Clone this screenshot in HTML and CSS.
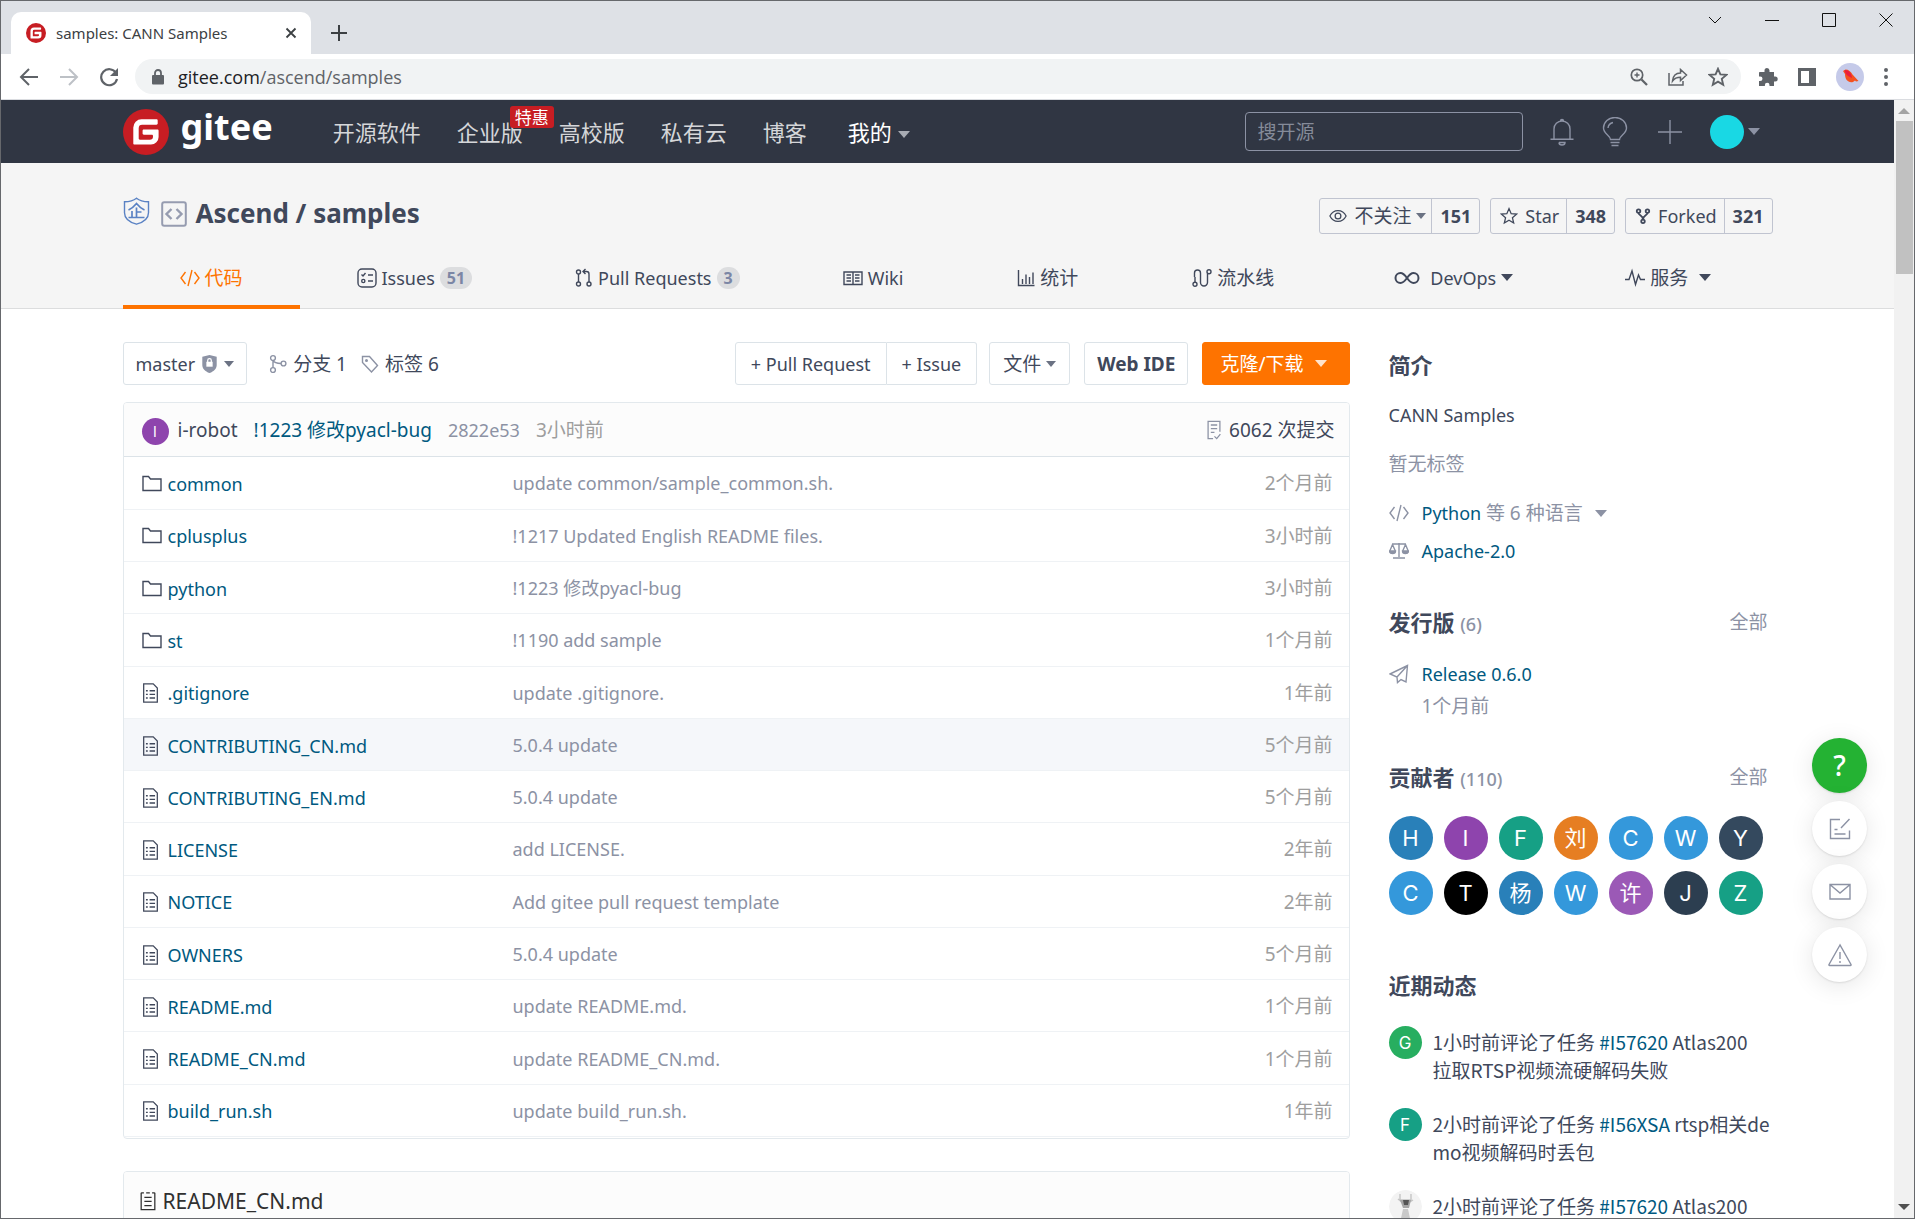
FILE: index.html
```html
<!DOCTYPE html>
<html lang="zh-CN">
<head>
<meta charset="utf-8">
<title>samples: CANN Samples</title>
<link rel="stylesheet" href="styles.css">
</head>
<body>
<svg class="sprite" aria-hidden="true">
  <symbol id="g-logo" viewBox="0 0 46 46"><circle cx="23" cy="23" r="23" fill="#c71d23" stroke="none"/><path d="M33.500 10.300H18.500a8.200 8.200 0 0 0-8.200 8.200v15.900c0 .7.500 1.200 1.200 1.200h16.500a7.600 7.600 0 0 0 7.600-7.600v-6.400c0-.7-.5-1.200-1.200-1.200H20.800c-.7 0-1.200.5-1.200 1.200v2.900c0 .7.500 1.200 1.200 1.200h8c.7 0 1.200.5 1.200 1.200v.6a3.200 3.200 0 0 1-3.200 3.200H16.900c-.7 0-1.200-.5-1.200-1.200V19.200a3.400 3.400 0 0 1 3.400-3.400h14.400c.7 0 1.200-.5 1.200-1.200v-3.100c0-.7-.5-1.200-1.200-1.200z" fill="#fff" stroke="none"/></symbol>
  <symbol id="folder" viewBox="0 0 20 20"><path d="M1 16.500V2.500h5.500l2 2.500H19v11.500z"/></symbol>
  <symbol id="file" viewBox="0 0 18 22"><path d="M1.500 1h10.500l4.500 4.500V21h-15z"/><path d="M4 8.500h2M8 8.500h6M4 12.500h2M8 12.500h6M4 16.500h2M8 16.500h6" stroke-width="1.600"/></symbol>
  <symbol id="readme" viewBox="0 0 18 22"><path d="M1.500 2v18.500h15V2M1.500 2h3M7 2h4M13.500 2h3M5 7h8M5 11.500h8M5 16h8"/></symbol>
  <symbol id="code" viewBox="0 0 20 20"><path d="M5.500 4 1 10l4.500 6M14.500 4 19 10l-4.500 6M12 2 8 18"/></symbol>
  <symbol id="issues" viewBox="0 0 20 20"><rect x="1" y="1" width="18" height="18" rx="4"/><path d="M4.500 6.500 6 8l2.500-3M11 7h5M11 13h5"/><circle cx="6.300" cy="13" r="1.600"/></symbol>
  <symbol id="pr" viewBox="0 0 18 20"><circle cx="3.500" cy="4" r="2"/><circle cx="3.500" cy="16" r="2"/><circle cx="14" cy="16" r="2"/><path d="M3.500 6v8M14 14V6c0-1.500-1-2.500-2.500-2.500H8M10.500 1 8 3.500 10.500 6"/></symbol>
  <symbol id="wiki" viewBox="0 0 20 20"><path d="M1 4h18v12.500H1zM10 4v12.500M3.500 7H8M3.500 10H8M3.500 13H8M12 7h4.500M12 10h4.500M12 13h4.500"/></symbol>
  <symbol id="chart" viewBox="0 0 18 20"><path d="M1.500 2v15.500h16M5.500 11v5M9 6.500V16M12.500 9v7M16 4.500V16"/></symbol>
  <symbol id="pipe" viewBox="0 0 20 20"><circle cx="3" cy="16.300" r="2"/><circle cx="17" cy="3.700" r="2"/><path d="M3 14.300V9M2.500 9V5a3 3 0 0 1 6 0v9.500a3.500 3.500 0 0 0 7 0V5.500"/></symbol>
  <symbol id="infinity" viewBox="0 0 26 20"><path d="M13 10c-2.500-3.500-4-5-6.500-5a5 5 0 0 0 0 10c2.500 0 4-1.500 6.500-5s4-5 6.500-5a5 5 0 0 1 0 10c-2.500 0-4-1.500-6.500-5z"/></symbol>
  <symbol id="pulse" viewBox="0 0 20 20"><path d="M0 11.500h4L7 3l3.500 13.500L13.500 7l2 4.500H20"/></symbol>
  <symbol id="eye" viewBox="0 0 20 20"><path d="M1 10c2-4 5-6 9-6s7 2 9 6c-2 4-5 6-9 6s-7-2-9-6z"/><circle cx="10" cy="10" r="3.200"/></symbol>
  <symbol id="star" viewBox="0 0 20 20"><path d="m10 1.800 2.400 5.600 6 .5-4.600 4 1.400 5.900-5.200-3.100-5.200 3.100 1.400-5.900-4.600-4 6-.5z"/></symbol>
  <symbol id="fork" viewBox="0 0 18 20"><circle cx="4" cy="4.500" r="2"/><circle cx="14" cy="4.500" r="2"/><circle cx="9" cy="16" r="2"/><path d="M4 6.500c0 3 5 2.500 5 7.500M14 6.500c0 3-5 2.500-5 7.500"/></symbol>
  <symbol id="branch" viewBox="0 0 18 20"><circle cx="4" cy="4" r="2.400"/><circle cx="4" cy="16" r="2.400"/><circle cx="14.500" cy="9.500" r="2.400"/><path d="M4 6.400v7.200M4 6.400c1 2 4 3.100 8 3.100"/></symbol>
  <symbol id="tag" viewBox="0 0 18 20"><path d="M1.500 2.500h7l8 9-6 6.500-9-9.500z"/><circle cx="5.500" cy="6.500" r=".8"/></symbol>
  <symbol id="commits" viewBox="0 0 16 22"><path d="M7 20.500H1.500v-19h13V13M4.500 5.500h7M4.500 9.500h7M4.500 13.500h4M8.500 18l2.500 2.500 4-5"/></symbol>
  <symbol id="scale" viewBox="0 0 20 20"><path d="M3 3h14M10 2v14M4 17h12M3.500 3.500.8 10M3.500 3.500 6.300 10M16.500 3.500 13.700 10M16.500 3.500 19.200 10"/><path d="M.5 10h6a3 2.600 0 0 1-6 0zM13.500 10h6a3 2.600 0 0 1-6 0z" fill="currentColor"/></symbol>
  <symbol id="plane" viewBox="0 0 20 20"><path d="M1 10 18.500 1.500 17 18l-5-2.500-3.500 3L8 13zM8 13 18.500 1.500"/></symbol>
  <symbol id="verified" viewBox="0 0 27 28"><path d="M13.500 1.200C10 4 6 4.700 1.500 4.700v11c0 6 5 9.500 12 11.500 7-2 12-5.500 12-11.500v-11c-4.500 0-8.500-.7-12-3.500z"/><path d="M5.500 13c3.500-1.500 6-4 8-6.500 2 2.500 4.500 5 8 6.500M5.500 20.500h16M13.500 10.500v10M13.500 15h5M9 14v6.500" stroke-width="1.700"/></symbol>
  <symbol id="repo" viewBox="0 0 26 26"><rect x="1.200" y="1.200" width="23.600" height="23.600" rx="2"/><path d="m10.500 8-5 5 5 5M15.500 8l5 5-5 5" stroke-width="2.400"/></symbol>
  <symbol id="bell" viewBox="0 0 24 30"><path d="M4 22V12a8 8 0 0 1 16 0v10M.5 22.200h23M9 25.500h6a3 2.500 0 0 1-6 0M10.500 4a1.500 1.500 0 0 1 3 0"/></symbol>
  <symbol id="bulb" viewBox="0 0 26 30"><path d="M8.500 22.500c0-4-7-5.500-7-11.500a11.500 10.500 0 0 1 23 0c0 6-7 7.500-7 11.500zM8.500 25.500h9M9.500 28.500h7M6 11a6.500 6.500 0 0 1 5-5.500"/></symbol>
  <symbol id="plus" viewBox="0 0 24 24"><path d="M12 0v24M0 12h24"/></symbol>
  <symbol id="compose" viewBox="0 0 22 22"><path d="M11 1.500H1.500v19h19v-8M20.500 1l-8.500 9M5.500 11.500h3M5.500 16h11"/></symbol>
  <symbol id="mail" viewBox="0 0 22 22"><path d="M1 3.500h20v14.500H1zM1.500 4 11 12l9.500-8"/></symbol>
  <symbol id="warn" viewBox="0 0 24 24"><path d="M12 2 1 21.500c-.3.600 0 1 .6 1h20.800c.6 0 .9-.4.6-1zM12 9v7M12 18v2"/></symbol>
  <symbol id="shield" viewBox="0 0 16 20"><path d="M8 0 16 2v9c0 4-3 7-8 9-5-2-8-5-8-9V2z" fill="currentColor" stroke="none"/><path d="M4.500 7.500h7v5.500h-7z" fill="#fff" stroke="none"/><path d="M6 8V6a2 2 0 0 1 4 0v2" stroke="#fff"/></symbol>
</svg>

<div class="window">
  <header class="chrome">
    <div class="tabstrip">
      <div class="tab">
        <svg class="favicon"><use href="#g-logo"/></svg>
        <span class="tab-title">samples: CANN Samples</span>
        <button class="plain" aria-label="关闭标签页"><svg width="12" height="12" viewBox="0 0 12 12"><path d="m1.500 1.500 9 9M10.500 1.500l-9 9" stroke-width="1.800"/></svg></button>
      </div>
      <button class="plain new-tab" aria-label="新标签页"><svg width="16" height="16" viewBox="0 0 16 16"><path d="M8 0v16M0 8h16" stroke-width="2"/></svg></button>
      <div class="win-controls">
        <button class="plain" aria-label="搜索标签页"><svg width="14" height="8" viewBox="0 0 14 8"><path d="m1 1 6 6 6-6"/></svg></button>
        <button class="plain" aria-label="最小化"><svg width="14" height="14" viewBox="0 0 14 14"><path d="M0 7.500h14"/></svg></button>
        <button class="plain" aria-label="最大化"><svg width="14" height="14" viewBox="0 0 14 14"><path d="M.5.500h13v13H.5z"/></svg></button>
        <button class="plain" aria-label="关闭"><svg width="14" height="14" viewBox="0 0 14 14"><path d="m.5.500 13 13M13.500.500l-13 13"/></svg></button>
      </div>
    </div>
    <div class="toolbar">
      <button class="plain" aria-label="后退"><svg width="20" height="20" viewBox="0 0 20 20"><path d="M19 10H3M10 2l-8 8 8 8" stroke-width="2"/></svg></button>
      <button class="plain faded" aria-label="前进"><svg width="20" height="20" viewBox="0 0 20 20"><path d="M1 10h16M10 2l8 8-8 8" stroke-width="2"/></svg></button>
      <button class="plain" aria-label="重新加载"><svg width="20" height="20" viewBox="0 0 20 20"><path d="M17 6a8 8 0 1 0 1 6" stroke-width="2.200"/><path d="M19 1v8h-8z" fill="currentColor" stroke="none"/></svg></button>
      <div class="omnibox">
        <svg width="12" height="16" viewBox="0 0 12 16"><rect y="6" width="12" height="9.500" rx="1" fill="currentColor" stroke="none"/><path d="M3 6.500V4a3 3 0 0 1 6 0v2.500" stroke-width="1.800"/></svg>
        <label for="omni"><b>gitee.com</b>/ascend/samples</label>
        <input id="omni" type="text">
        <svg width="18" height="18" viewBox="0 0 18 18"><circle cx="7" cy="7" r="5.700" stroke-width="1.700"/><path d="m11.500 11.500 5.500 5.500" stroke-width="2.300"/><path d="M4.500 7h5M7 4.500v5" stroke-width="1.400"/></svg>
        <svg width="20" height="18" viewBox="0 0 20 18"><path d="M1 5v12h14v-4M4.500 13c.5-5 3.500-8 8-8V1.500L18.500 7l-6 5.500V9.200c-3.500 0-6 1-8 3.800z" stroke-width="1.500"/></svg>
        <svg width="20" height="20"><use href="#star" stroke-width="1.900"/></svg>
      </div>
      <div class="ext">
        <svg width="20" height="20" viewBox="0 0 20 20"><path d="M2 5h4.500V3.500a2.500 2.500 0 0 1 5 0V5H16v4.500h1.200a2.500 2.500 0 0 1 0 5H16V19h-4.500v-1a2.300 2.300 0 0 0-4.600 0v1H1v-5h1.200a2.300 2.300 0 0 0 0-4.600H1V6c0-.6.400-1 1-1z" fill="currentColor" stroke="none"/></svg>
        <svg width="18" height="18" viewBox="0 0 18 18"><path d="M0 0h18v18H0zM3 3v12h8V3z" fill="currentColor" fill-rule="evenodd" stroke="none"/></svg>
        <svg class="profile" viewBox="0 0 28 28"><circle cx="14" cy="14" r="14" fill="#c5cae9" stroke="none"/><path d="m7 8 2.500-1.500c3 0 5.500 2 7 5l6 6.500-2.500.5-1-1-2 1.500c-5 1-8-2.500-8-8z" fill="#f4511e" stroke="none"/><path d="M8.500 7c4-.5 7 3 7.500 8l-4-2c-2-1.500-3-3.500-3.500-6z" fill="#e91e3c" stroke="none"/></svg>
        <svg width="4" height="18" viewBox="0 0 4 18"><path d="M2 0a2 2 0 1 1 0 4 2 2 0 0 1 0-4zM2 7a2 2 0 1 1 0 4 2 2 0 0 1 0-4zM2 14a2 2 0 1 1 0 4 2 2 0 0 1 0-4z" fill="currentColor" stroke="none"/></svg>
      </div>
    </div>
  </header>

  <div class="viewport">
    <div class="page">
      <div class="navbar">
        <div class="wrap nav-row">
          <a class="brand" href="#"><svg width="46" height="46"><use href="#g-logo"/></svg><span>gitee</span></a>
          <nav class="nav-links">
            <a href="#">开源软件</a>
            <a href="#" class="promo">企业版<em>特惠</em></a>
            <a href="#">高校版</a>
            <a href="#">私有云</a>
            <a href="#">博客</a>
            <a href="#" class="mine">我的<i class="caret"></i></a>
          </nav>
          <input class="search" type="text" placeholder="搜开源" aria-label="搜开源">
          <div class="nav-icons">
            <svg width="24" height="30"><use href="#bell"/></svg>
            <svg width="26" height="30"><use href="#bulb"/></svg>
            <svg width="24" height="24"><use href="#plus"/></svg>
            <button class="plain user" aria-label="账户"><span></span><i class="caret"></i></button>
          </div>
        </div>
      </div>

      <div class="repo-head">
        <div class="wrap">
          <div class="title-row">
            <svg class="blue" width="27" height="28"><use href="#verified"/></svg>
            <svg class="repo-icon" width="26" height="26"><use href="#repo"/></svg>
            <h1><a href="#">Ascend</a> / <a href="#">samples</a></h1>
            <div class="stats">
              <div class="stat"><button><svg width="18" height="18"><use href="#eye"/></svg><span class="cn">不关注</span><i class="caret"></i></button><a href="#">151</a></div>
              <div class="stat"><button><svg width="18" height="18"><use href="#star"/></svg>Star</button><a href="#">348</a></div>
              <div class="stat"><button><svg width="16" height="18"><use href="#fork" stroke-width="2"/></svg>Forked</button><a href="#">321</a></div>
            </div>
          </div>
          <nav class="tabs">
            <a href="#" class="on"><svg width="20" height="20"><use href="#code"/></svg><span class="cn">代码</span></a>
            <a href="#"><svg width="20" height="20"><use href="#issues"/></svg>Issues<b>51</b></a>
            <a href="#"><svg width="18" height="20"><use href="#pr"/></svg>Pull Requests<b>3</b></a>
            <a href="#"><svg width="20" height="20"><use href="#wiki"/></svg>Wiki</a>
            <a href="#"><svg width="18" height="20"><use href="#chart"/></svg><span class="cn">统计</span></a>
            <a href="#"><svg width="20" height="20"><use href="#pipe"/></svg><span class="cn">流水线</span></a>
            <a href="#" class="devops"><svg width="26" height="20"><use href="#infinity" stroke-width="2"/></svg>DevOps<i class="caret"></i></a>
            <a href="#" class="service"><svg width="20" height="20"><use href="#pulse"/></svg><span class="cn">服务</span><i class="caret"></i></a>
          </nav>
        </div>
      </div>

      <div class="wrap body-grid">
        <main>
          <div class="actions">
            <button class="btn branch">master<svg width="15" height="18"><use href="#shield"/></svg><i class="caret"></i></button>
            <a class="ref" href="#"><svg width="18" height="20"><use href="#branch"/></svg>分支 1</a>
            <a class="ref" href="#"><svg width="18" height="20"><use href="#tag"/></svg>标签 6</a>
            <div class="right">
              <div class="group"><button class="btn">+ Pull Request</button><button class="btn">+ Issue</button></div>
              <button class="btn files-btn">文件<i class="caret"></i></button>
              <button class="btn ide">Web IDE</button>
              <button class="btn clone">克隆/下载<i class="caret"></i></button>
            </div>
          </div>

          <section class="box">
            <div class="commit">
              <span class="avatar tiny purple">I</span>
              <a href="#" class="author">i-robot</a>
              <a href="#" class="link">!1223 修改pyacl-bug</a>
              <a href="#" class="muted">2822e53</a>
              <span class="when">3小时前</span>
              <a href="#" class="count"><svg width="16" height="20"><use href="#commits"/></svg>6062 次提交</a>
            </div>
            <table>
              <tbody>
                <tr><td><svg class="dir"><use href="#folder"/></svg><a href="#">common</a></td><td>update common/sample_common.sh.</td><td>2个月前</td></tr>
                <tr><td><svg class="dir"><use href="#folder"/></svg><a href="#">cplusplus</a></td><td>!1217 Updated English README files.</td><td>3小时前</td></tr>
                <tr><td><svg class="dir"><use href="#folder"/></svg><a href="#">python</a></td><td>!1223 修改pyacl-bug</td><td>3小时前</td></tr>
                <tr><td><svg class="dir"><use href="#folder"/></svg><a href="#">st</a></td><td>!1190 add sample</td><td>1个月前</td></tr>
                <tr><td><svg class="doc"><use href="#file"/></svg><a href="#">.gitignore</a></td><td>update .gitignore.</td><td>1年前</td></tr>
                <tr class="hover"><td><svg class="doc"><use href="#file"/></svg><a href="#">CONTRIBUTING_CN.md</a></td><td>5.0.4 update</td><td>5个月前</td></tr>
                <tr><td><svg class="doc"><use href="#file"/></svg><a href="#">CONTRIBUTING_EN.md</a></td><td>5.0.4 update</td><td>5个月前</td></tr>
                <tr><td><svg class="doc"><use href="#file"/></svg><a href="#">LICENSE</a></td><td>add LICENSE.</td><td>2年前</td></tr>
                <tr><td><svg class="doc"><use href="#file"/></svg><a href="#">NOTICE</a></td><td>Add gitee pull request template</td><td>2年前</td></tr>
                <tr><td><svg class="doc"><use href="#file"/></svg><a href="#">OWNERS</a></td><td>5.0.4 update</td><td>5个月前</td></tr>
                <tr><td><svg class="doc"><use href="#file"/></svg><a href="#">README.md</a></td><td>update README.md.</td><td>1个月前</td></tr>
                <tr><td><svg class="doc"><use href="#file"/></svg><a href="#">README_CN.md</a></td><td>update README_CN.md.</td><td>1个月前</td></tr>
                <tr><td><svg class="doc"><use href="#file"/></svg><a href="#">build_run.sh</a></td><td>update build_run.sh.</td><td>1年前</td></tr>
              </tbody>
            </table>
          </section>

          <section class="box readme">
            <h3><svg width="18" height="20"><use href="#readme"/></svg>README_CN.md</h3>
          </section>
        </main>

        <aside>
          <h2>简介</h2>
          <p class="intro">CANN Samples</p>
          <p class="no-tags">暂无标签</p>
          <p class="meta"><svg width="20" height="20"><use href="#code"/></svg><a href="#">Python</a>&nbsp;<span class="cn">等 6 种语言</span><i class="caret"></i></p>
          <p class="meta second"><svg width="20" height="20"><use href="#scale"/></svg><a href="#">Apache-2.0</a></p>

          <div class="side-title"><h2>发行版 <small>(6)</small></h2><a href="#">全部</a></div>
          <p class="meta release"><svg width="20" height="20"><use href="#plane"/></svg><a href="#">Release 0.6.0</a></p>
          <p class="release-date">1个月前</p>

          <div class="side-title"><h2>贡献者 <small>(110)</small></h2><a href="#">全部</a></div>
          <div class="people">
            <span class="avatar blue2">H</span><span class="avatar purple">I</span><span class="avatar teal">F</span><span class="avatar orange">刘</span><span class="avatar sky">C</span><span class="avatar sky">W</span><span class="avatar slate">Y</span>
            <span class="avatar sky">C</span><span class="avatar black">T</span><span class="avatar blue2">杨</span><span class="avatar sky">W</span><span class="avatar violet">许</span><span class="avatar navy">J</span><span class="avatar teal">Z</span>
          </div>

          <h2 class="recent">近期动态</h2>
          <ul class="feed">
            <li><span class="avatar small green">G</span><p>1小时前评论了任务 <a href="#">#I57620</a> Atlas200<br>拉取RTSP视频流硬解码失败</p></li>
            <li><span class="avatar small teal">F</span><p>2小时前评论了任务 <a href="#">#I56XSA</a> rtsp相关demo视频解码时丢包</p></li>
            <li><svg class="avatar small" viewBox="0 0 33 33"><circle cx="16.500" cy="16.500" r="16.500" fill="#f3f3f3" stroke="none"/><path d="M11 4v6h11V4M9 9l5 4h5l5-3" stroke="#c4c4c4"/><path d="M11 10h11l-2 8h-6z" fill="#a5a5a5" stroke="none"/><path d="M14 10h6l-1 5h-4z" fill="#555" stroke="none"/><path d="M14 19h5l3 14H11z" fill="#c9c9c9" stroke="none"/></svg><p>2小时前评论了任务 <a href="#">#I57620</a> Atlas200</p></li>
          </ul>
        </aside>
      </div>

      <div class="float-bar">
        <button class="help" aria-label="帮助">?</button>
        <button aria-label="反馈"><svg width="22" height="22"><use href="#compose"/></svg></button>
        <button aria-label="私信"><svg width="22" height="22"><use href="#mail"/></svg></button>
        <button aria-label="举报"><svg width="24" height="24"><use href="#warn"/></svg></button>
      </div>
    </div>
    <div class="scrollbar"><i class="up"></i><span class="thumb"></span><i class="down"></i></div>
  </div>
</div>
</body>
</html>
```
FILE: styles.css
```css
* { box-sizing: border-box; }
body {
  margin: 0;
  font: 18px/28px "Noto Sans", "Noto Sans CJK SC", sans-serif;
  color: #40485b;
  background: #fff;
}
h1, h2, h3, p, ul { margin: 0; padding: 0; }
ul { list-style: none; }
a { color: inherit; text-decoration: none; }
button, input { font: inherit; color: inherit; margin: 0; }
svg { fill: none; stroke: currentColor; stroke-width: 1.400; flex: none; display: block; }
.sprite { position: absolute; width: 0; height: 0; }
.plain { border: 0; background: none; padding: 0; display: flex; align-items: center; }
.cn { font-size: 19px; }
.caret {
  flex: none;
  width: 0;
  border: solid transparent;
  border-width: 7px 6px 0;
  border-top-color: currentColor;
}

/* Browser window */
.window {
  height: 100vh;
  display: flex;
  flex-direction: column;
  border: 1px solid #66686c;
  overflow: hidden;
}
.chrome { color: #5f6368; border-bottom: 1px solid #dadce0; }
.tabstrip {
  display: flex;
  align-items: flex-end;
  height: 53px;
  padding-left: 10px;
  background: #dee1e6;
  color: #3c4043;
}
.tab {
  display: flex;
  align-items: center;
  width: 300px;
  height: 42px;
  padding: 0 14px 0 15px;
  border-radius: 10px 10px 0 0;
  background: #fff;
}
.favicon { width: 20px; height: 20px; margin-right: 10px; }
.tab-title { flex: 1; font-size: 15px; }
.new-tab { height: 42px; margin-left: 20px; }
.win-controls { display: flex; align-self: flex-start; margin-left: auto; color: #111; }
.win-controls svg { stroke-width: 1; }
.win-controls button { width: 57px; height: 38px; justify-content: center; }
.toolbar { display: flex; align-items: center; height: 45px; padding: 0 26px 0 18px; gap: 20px; }
.toolbar .faded { color: #bdc1c6; }
.omnibox {
  flex: 1;
  display: flex;
  align-items: center;
  gap: 20px;
  height: 35px;
  padding: 0 13px 0 17px;
  margin: 0 -3px 0 -4px;
  border-radius: 18px;
  background: #f1f3f4;
}
.omnibox label { margin-left: -6px; font: 18px/28px "Open Sans", sans-serif; }
.omnibox b { font-weight: 400; color: #202124; }
.omnibox input { flex: 1; min-width: 0; border: 0; background: none; outline: 0; }
.ext { display: flex; align-items: center; gap: 20px; }
.ext .profile { width: 28px; height: 28px; }

/* Page viewport */
.viewport { flex: 1; min-height: 0; display: flex; }
.page { flex: 1; min-width: 0; position: relative; overflow: hidden; }
.wrap { max-width: 1650px; margin: 0 auto; }
.scrollbar {
  width: 20px;
  display: flex;
  flex-direction: column;
  align-items: center;
  padding: 8px 0;
  background: #f1f1f1;
}
.scrollbar i { border: 6px solid transparent; }
.scrollbar .up { border-top: 0; border-bottom-color: #a3a3a3; }
.scrollbar .down { margin-top: auto; border-bottom: 0; border-top-color: #505050; }
.thumb { width: 17px; height: 153px; margin-top: 7px; background: #c1c1c1; }

.navbar { background: #303643; color: #d5d6d9; }
.nav-row { display: flex; align-items: center; height: 63px; }
.brand { display: flex; align-items: center; gap: 12px; color: #fff; }
.brand span { font: 700 36px/50px "Noto Sans", sans-serif; padding-bottom: 9px; }
.nav-links { display: flex; gap: 36px; margin-left: 60px; font-size: 22px; }
.nav-links a { position: relative; }
.nav-links em {
  position: absolute;
  left: 53px;
  top: -12px;
  padding: 0 5px;
  border-radius: 3px;
  background: #c71d23;
  color: #fff;
  font: 17px/22px "Noto Sans CJK SC", sans-serif;
  white-space: nowrap;
}
.nav-links .mine { display: flex; align-items: center; gap: 6px; margin-left: 5px; color: #fff; }
.mine .caret { color: #a7abb3; margin-top: 5px; }
.search {
  width: 278px;
  height: 39px;
  margin-left: auto;
  padding: 0 12px;
  border: 1px solid #8c92a4;
  border-radius: 4px;
  background: none;
  font-size: 19px;
}
.search::placeholder { color: #858b99; }
.nav-icons { display: flex; align-items: center; margin-left: 27px; gap: 28px; color: #8c92a4; }
.nav-icons svg + svg + svg { margin: 0 0 0 2px; }
.user { gap: 4px; margin-right: 13px; }
.user span { width: 34px; height: 34px; border-radius: 50%; background: #19d8e4; }

.repo-head { background: #f5f5f5; border-bottom: 1px solid #dcddde; padding-top: 35px; }
.title-row { display: flex; align-items: center; margin-bottom: 16px; }
.title-row .blue { color: #5a82c4; margin-top: -10px; }
.repo-icon { color: #969cb0; stroke-width: 2; margin: -4px 9px 0 11px; }
h1 { font-size: 26px; line-height: 36px; margin-top: -6px; }
.stats { display: flex; gap: 10px; margin-left: auto; }
.stat { display: flex; height: 36px; border: 1px solid #c0c4d0; border-radius: 3px; }
.stat button { display: flex; align-items: center; gap: 7px; padding: 0 7px 0 9px; border: 0; background: none; }
.stat .caret { margin: 0 -2px; border-width: 6px 5px 0; color: #6b7283; }
.stat a { padding: 3px 8px; border-left: 1px solid #c0c4d0; font-weight: 700; }
.tabs { display: flex; margin-bottom: -1px; }
.tabs a {
  display: flex;
  align-items: center;
  gap: 5px;
  height: 59px;
  padding: 0 57px;
  border-bottom: 4px solid transparent;
}
.tabs .on { color: #fe7300; border-color: #fe7300; }
.tabs b {
  margin-right: -11px;
  padding: 0 7px;
  border-radius: 11px;
  background: #dcdddf;
  color: #7b86a5;
  font-size: 16px;
  line-height: 22px;
}
.tabs .devops { margin-left: 6px; }
.devops svg { margin-right: 5px; }
.tabs .service { margin-left: -2px; }
.service .caret { margin-left: 6px; }

.body-grid { display: grid; grid-template-columns: minmax(0, 1fr) 384px; gap: 39px; padding-top: 33px; }
.actions { display: flex; align-items: center; margin-bottom: 17px; }
.btn {
  display: flex;
  align-items: center;
  gap: 8px;
  height: 43px;
  padding: 0 13px;
  border: 1px solid #dce3e8;
  border-radius: 3px;
  background: #fff;
  white-space: nowrap;
}
.btn .caret { border-width: 6px 5px 0; color: #6b7283; }
.branch { gap: 7px; padding: 0 12px; margin-right: 22px; }
.branch svg { color: #8c92a4; }
.ref { display: flex; align-items: center; gap: 6px; margin-right: 14px; font-size: 19px; }
.ref svg, .count svg { color: #8c92a4; }
.right { display: flex; gap: 14px; margin-left: auto; }
.group { display: flex; margin-right: -2px; }
.group .btn:first-child { border-radius: 3px 0 0 3px; padding: 0 15px; }
.group .btn:last-child { border-left: 0; border-radius: 0 3px 3px 0; padding: 0 15px; }
.files-btn, .clone, .ide { font-size: 19px; }
.files-btn { gap: 5px; }
.ide { font-weight: 700; padding: 0 12px; }
.btn.clone { gap: 11px; padding: 0 22px 0 17px; border-color: #fe7300; background: #fe7300; color: #fff; }
.clone .caret { border-width: 7px 6px 0; color: #ffe3cc; }

.box { border: 1px solid #e3e9ed; border-radius: 4px; padding-bottom: 1px; overflow: hidden; }
.commit {
  display: flex;
  align-items: center;
  gap: 16px;
  height: 54px;
  padding: 0 14px 0 18px;
  border-bottom: 1px solid #dce3e8;
  background: #fcfcfc;
  font-size: 19px;
}
.author { margin-left: -7px; }
.link { color: #005980; }
.muted { color: #8c92a4; font-size: 18px; }
.when { color: #9e9e9e; }
.count { display: flex; align-items: center; gap: 7px; margin-left: auto; }
table { width: 100%; height: 680px; border-collapse: collapse; table-layout: fixed; }
td { height: 52px; padding: 1px 0 0; border-bottom: 1px solid #eff2f5; color: #8c92a4; }
td:first-child { width: 389px; padding: 0 0 0 18px; }
td:first-child svg, td:first-child a { display: inline-block; vertical-align: middle; }
td svg { color: #40485b; }
td a { color: #005980; }
td:last-child { width: 140px; padding-right: 16px; text-align: right; color: #9e9e9e; font-size: 19px; }
.dir { width: 20px; height: 20px; margin-right: 6px; }
.doc { width: 17px; height: 20px; margin-right: 9px; }
.hover { background: #f5f7fa; }
.readme { margin-top: 32px; height: 260px; }
h3 {
  display: flex;
  align-items: center;
  gap: 6px;
  height: 58px;
  padding-left: 15px;
  background: #fcfcfc;
  color: #303030;
  font-size: 21px;
  font-weight: 400;
}

aside { padding-top: 9px; }
h2 { font-size: 22px; line-height: 28px; }
small { font-size: 18px; color: #8c92a4; font-weight: 500; }
.intro { margin-top: 22px; }
.no-tags { margin: 21px 0; font-size: 19px; color: #8c92a4; }
.meta { display: flex; align-items: center; color: #8c92a4; }
.meta svg { margin-right: 13px; }
.meta a, .feed a { color: #005980; }
.meta .caret { margin-left: 12px; }
.second { margin-top: 10px; }
.side-title { display: flex; justify-content: space-between; margin-top: 43px; padding-right: 5px; }
.side-title a { font-size: 19px; color: #8c92a4; }
.release { margin-top: 22px; }
.release-date { margin: 4px 0 0 33px; font-size: 19px; color: #8c92a4; }
.people { display: grid; grid-template-columns: repeat(7, 44px); gap: 11px; margin-top: 23px; }
.avatar {
  flex: none;
  display: flex;
  align-items: center;
  justify-content: center;
  width: 44px;
  height: 44px;
  border-radius: 50%;
  color: #fff;
  font: 22px/44px Inter, "Noto Sans CJK SC", sans-serif;
}
.small { width: 33px; height: 33px; font-size: 17px; }
.tiny { width: 27px; height: 27px; font-size: 14px; margin-top: 4px; }
.blue2 { background: #2980b9; }
.purple { background: #8e44ad; }
.teal { background: #16a085; }
.orange { background: #e67e22; }
.sky { background: #3498db; }
.slate { background: #34495e; }
.black { background: #000; }
.violet { background: #9b59b6; }
.navy { background: #2c3e50; }
.green { background: #27ae60; }
.recent { margin-top: 56px; }
.feed { display: grid; gap: 24px; margin-top: 27px; }
.feed li { display: flex; gap: 11px; }
.feed p { padding-top: 2px; font: 19px/28px "Noto Sans CJK SC", sans-serif; word-break: break-all; }

.float-bar { position: absolute; right: 27px; top: 638px; display: grid; gap: 8px; }
.float-bar button {
  display: flex;
  align-items: center;
  justify-content: center;
  width: 55px;
  height: 55px;
  padding: 0;
  border: 0;
  border-radius: 50%;
  background: #fff;
  color: #8c92a4;
  box-shadow: 0 1px 2px rgba(0, 0, 0, .1), 0 4px 24px rgba(0, 0, 0, .1);
}
.float-bar .help { background: #24b233; color: #fff; font: 500 28px/55px "Noto Sans", sans-serif; }
```
